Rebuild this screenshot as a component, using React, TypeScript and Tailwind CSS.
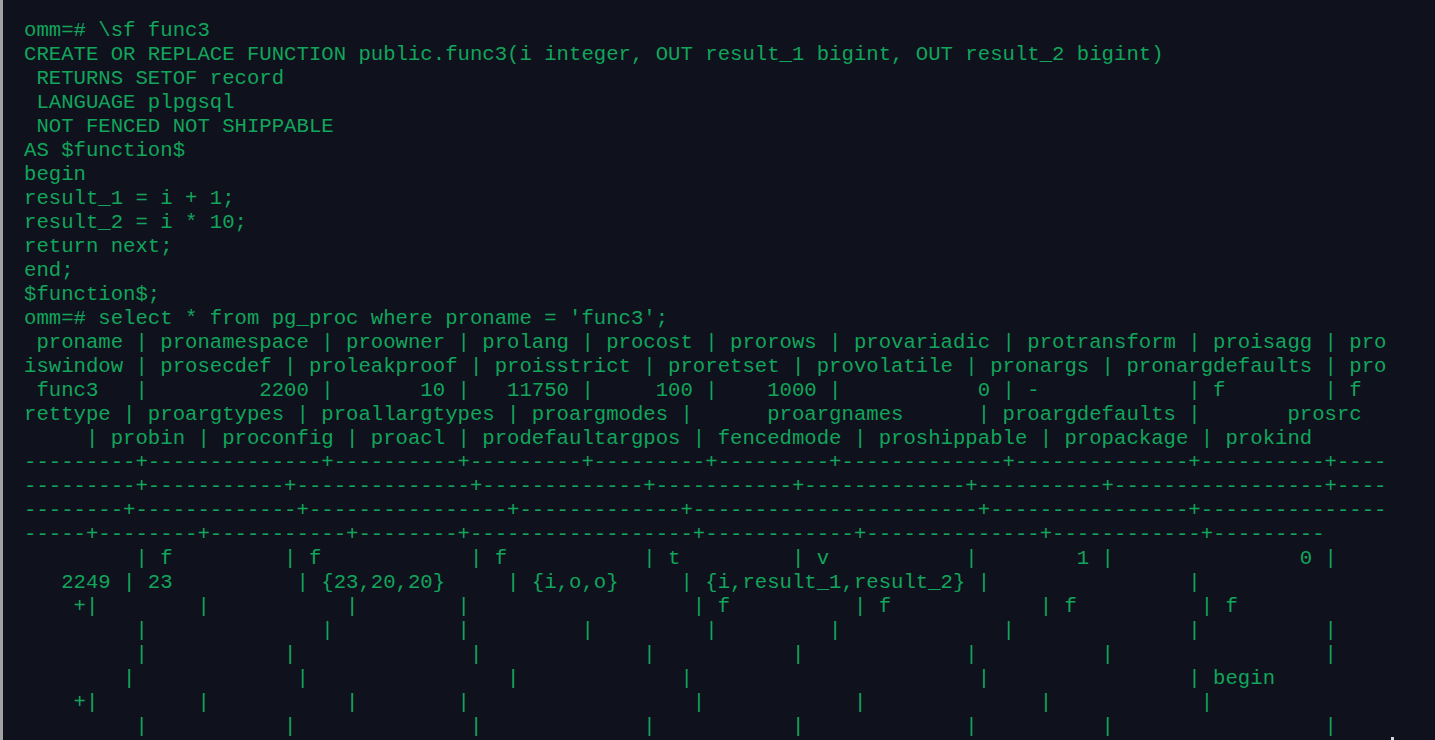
type Col = { name: string; value: string; align: 'l' | 'r' };

const cols: Col[] = [
  { name: 'proname', value: 'func3', align: 'l' },
  { name: 'pronamespace', value: '2200', align: 'r' },
  { name: 'proowner', value: '10', align: 'r' },
  { name: 'prolang', value: '11750', align: 'r' },
  { name: 'procost', value: '100', align: 'r' },
  { name: 'prorows', value: '1000', align: 'r' },
  { name: 'provariadic', value: '0', align: 'r' },
  { name: 'protransform', value: '-', align: 'l' },
  { name: 'proisagg', value: 'f', align: 'l' },
  { name: 'proiswindow', value: 'f', align: 'l' },
  { name: 'prosecdef', value: 'f', align: 'l' },
  { name: 'proleakproof', value: 'f', align: 'l' },
  { name: 'proisstrict', value: 'f', align: 'l' },
  { name: 'proretset', value: 't', align: 'l' },
  { name: 'provolatile', value: 'v', align: 'l' },
  { name: 'pronargs', value: '1', align: 'r' },
  { name: 'pronargdefaults', value: '0', align: 'r' },
  { name: 'prorettype', value: '2249', align: 'r' },
  { name: 'proargtypes', value: '23', align: 'l' },
  { name: 'proallargtypes', value: '{23,20,20}', align: 'l' },
  { name: 'proargmodes', value: '{i,o,o}', align: 'l' },
  { name: 'proargnames', value: '{i,result_1,result_2}', align: 'l' },
  { name: 'proargdefaults', value: '', align: 'l' },
  { name: 'prosrc', value: '\nbegin\nresult_1 = i + 1;\nresult_2 = i * 10;\nreturn next;\nend;\n', align: 'l' },
  { name: 'probin', value: '', align: 'l' },
  { name: 'proconfig', value: '', align: 'l' },
  { name: 'proacl', value: '', align: 'l' },
  { name: 'prodefaultargpos', value: '', align: 'l' },
  { name: 'fencedmode', value: 'f', align: 'l' },
  { name: 'proshippable', value: 'f', align: 'l' },
  { name: 'propackage', value: 'f', align: 'l' },
  { name: 'prokind', value: 'f', align: 'l' },
];

const TERM_WIDTH = 110;

const widths = cols.map((c) =>
  Math.max(c.name.length, ...c.value.split('\n').map((l) => l.length))
);

const center = (s: string, w: number) => {
  const left = Math.floor((w - s.length) / 2);
  return ' '.repeat(left) + s + ' '.repeat(w - s.length - left);
};

const header = cols.map((c, i) => ' ' + center(c.name, widths[i]) + ' ').join('|');
const separator = widths.map((w) => '-'.repeat(w + 2)).join('+');

const rowLine = (n: number) =>
  cols
    .map((c, i) => {
      const lines = c.value.split('\n');
      const v = lines[n] ?? '';
      const padded = c.align === 'r' ? v.padStart(widths[i]) : v.padEnd(widths[i]);
      return ' ' + padded + (n < lines.length - 1 ? '+' : ' ');
    })
    .join('|');

const chunks = (s: string) => {
  const out: string[] = [];
  for (let i = 0; i < s.length; i += TERM_WIDTH) out.push(s.slice(i, i + TERM_WIDTH));
  return out;
};

const h = chunks(header);
const sep = chunks(separator);
const r0 = chunks(rowLine(0));
const r1 = chunks(rowLine(1));
const r2 = chunks(rowLine(2));

const lines: string[] = [
  'omm=# \\sf func3',
  'CREATE OR REPLACE FUNCTION public.func3(i integer, OUT result_1 bigint, OUT result_2 bigint)',
  ' RETURNS SETOF record',
  ' LANGUAGE plpgsql',
  ' NOT FENCED NOT SHIPPABLE',
  'AS $function$',
  'begin',
  'result_1 = i + 1;',
  'result_2 = i * 10;',
  'return next;',
  'end;',
  '$function$;',
  "omm=# select * from pg_proc where proname = 'func3';",
  h[0],
  h[1],
  r0[0],
  h[2],
  h[3],
  sep[0],
  sep[1],
  sep[2],
  sep[3],
  r0[1],
  r0[2],
  r0[3],
  r1[0],
  r1[1],
  r1[2],
  r1[3],
  r2[1],
];

export default function App() {
  return (
    <div className="relative flex w-[1435px] h-[740px] overflow-hidden bg-[#0f111d]">
      {/* window edge */}
      <div className="w-[3px] shrink-0 bg-[#a2a2a2]" />

      <pre className="pl-[21px] pt-[19px] font-['Liberation_Mono',monospace] text-[20.65px] leading-[24px] text-[#12a55b] whitespace-pre">
        {lines.map((l, i) => (
          <div key={i}>{l === '' ? ' ' : l}</div>
        ))}
      </pre>

      {/* mouse pointer tip at the bottom edge */}
      <div className="absolute left-[1391px] top-[737px] w-[3px] h-[3px] bg-[#d8d8d8]" />
    </div>
  );
}
